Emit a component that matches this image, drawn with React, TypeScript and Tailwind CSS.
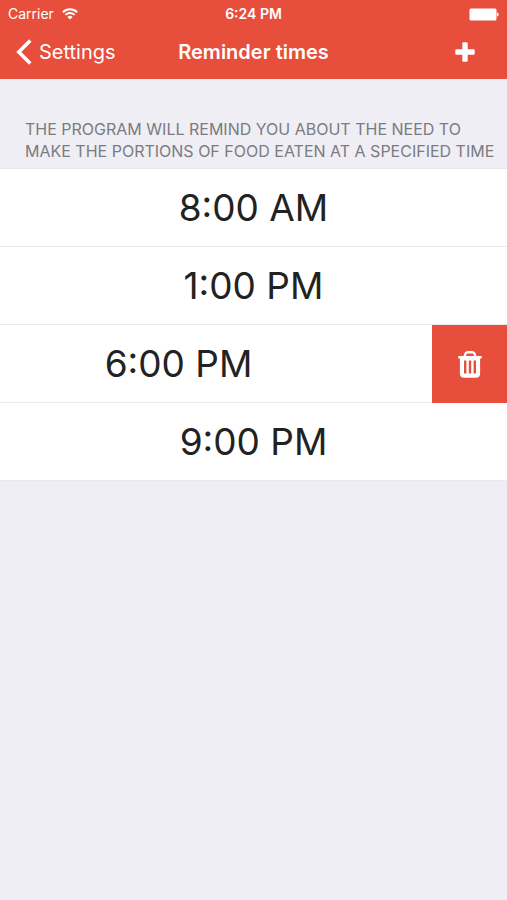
import { useState } from "react";

type Reminder = { id: number; time: string };

const initialReminders: Reminder[] = [
  { id: 1, time: "8:00 AM" },
  { id: 2, time: "1:00 PM" },
  { id: 3, time: "6:00 PM" },
  { id: 4, time: "9:00 PM" },
];

function WifiIcon() {
  return (
    <svg viewBox="0 0 16 12" className="h-3 w-4" fill="none" stroke="currentColor" strokeWidth="1.9" aria-hidden="true">
      <path d="M0.9 4.2a10.2 10.2 0 0 1 14.2 0" />
      <path d="M3.4 6.9a6.5 6.5 0 0 1 9.2 0" />
      <path d="M8 11.6 5.4 9a3.7 3.7 0 0 1 5.2 0z" fill="currentColor" stroke="none" />
    </svg>
  );
}

function BatteryIcon() {
  return (
    <svg viewBox="0 0 30 13" className="h-[13px] w-[30px]" fill="currentColor" aria-hidden="true">
      <rect x="0.5" y="0.5" width="27" height="12" rx="1.5" />
      <path d="M28 4.4c2.2.5 2.2 3.7 0 4.2z" />
    </svg>
  );
}

function BackIcon() {
  return (
    <svg viewBox="0 0 16 26" className="h-[26px] w-4" fill="none" stroke="currentColor" strokeWidth="3.6" aria-hidden="true">
      <path d="M14.3 1.5 2.8 13l11.5 11.5" />
    </svg>
  );
}

function PlusIcon() {
  return (
    <svg viewBox="0 0 20 20" className="size-5" fill="currentColor" aria-hidden="true">
      <rect x="7.3" y="0.3" width="5.4" height="19.4" rx="1.2" />
      <rect x="0.3" y="7.3" width="19.4" height="5.4" rx="1.2" />
    </svg>
  );
}

function TrashIcon() {
  return (
    <svg viewBox="0 0 24 27" className="h-[27px] w-6" fill="currentColor" aria-hidden="true">
      <path
        d="M6.6 5.5 7.3 3Q7.9 1.3 9.7 1.3h4.6q1.8 0 2.4 1.7l.7 2.5"
        fill="none"
        stroke="currentColor"
        strokeWidth="2.4"
      />
      <rect x="0.2" y="5" width="23.6" height="2.6" rx="0.6" />
      {/* Can body with three slots cut out */}
      <path
        fillRule="evenodd"
        d="M1.9 6.5h20.2v16q0 4.3-4.3 4.3H6.2q-4.3 0-4.3-4.3zM6 9.4v13.200h2.400V9.4zM10.800 9.4v13.200h2.400V9.4zM15.600 9.4v13.200h2.400V9.4z"
      />
    </svg>
  );
}

function ReminderRow({
  time,
  open,
  onToggle,
  onDelete,
}: {
  time: string;
  open: boolean;
  onToggle: () => void;
  onDelete: () => void;
}) {
  return (
    <li className="flex h-[78px] justify-end overflow-hidden bg-white">
      {/* Full-width cell, pushed left when the delete action is showing */}
      <button
        type="button"
        onClick={onToggle}
        className="w-full shrink-0 border-b border-[#e9e9ec] text-center text-[37px] leading-none text-[#222222]"
      >
        {time}
      </button>
      {open && (
        <button
          type="button"
          aria-label={`Delete ${time}`}
          onClick={onDelete}
          className="flex w-[75px] shrink-0 items-center justify-center bg-[#e84e3c] text-white"
        >
          <TrashIcon />
        </button>
      )}
    </li>
  );
}

export default function App() {
  const [reminders, setReminders] = useState(initialReminders);
  const [openId, setOpenId] = useState<number | null>(3);

  const addReminder = () => {
    setReminders([...reminders, { id: Date.now(), time: "10:00 PM" }]);
  };

  return (
    <div className="min-h-screen bg-[#efeef4] font-['Inter',sans-serif]">
      <header className="bg-[#e84e3c] pb-[3px] text-white">
        {/* Status bar */}
        <div className="grid h-7 grid-cols-[1fr_auto_1fr] items-center px-2 text-sm">
          <div className="flex items-center gap-2">
            <span>Carrier</span>
            <WifiIcon />
          </div>
          <span className="font-semibold">6:24 PM</span>
          <div className="flex justify-end">
            <BatteryIcon />
          </div>
        </div>

        {/* Navigation bar */}
        <div className="grid h-12 grid-cols-[1fr_auto_1fr] items-center px-4 text-xl">
          <a href="#settings" className="flex items-center gap-[7px]">
            <BackIcon />
            <span>Settings</span>
          </a>
          <h1 className="font-semibold">Reminder times</h1>
          <button type="button" aria-label="Add reminder" onClick={addReminder} className="justify-self-end px-4">
            <PlusIcon />
          </button>
        </div>
      </header>

      <main>
        <p className="pt-[39px] pr-2 pb-1.5 pl-[25px] text-base leading-[22px] text-[#7b7b80] uppercase">
          The program will remind you about the need to make the portions of food eaten at a specified time
        </p>
        <ul className="border-t border-[#e6e6e9]">
          {reminders.map((r) => (
            <ReminderRow
              key={r.id}
              time={r.time}
              open={openId === r.id}
              onToggle={() => setOpenId(openId === r.id ? null : r.id)}
              onDelete={() => setReminders(reminders.filter((item) => item.id !== r.id))}
            />
          ))}
        </ul>
      </main>
    </div>
  );
}
